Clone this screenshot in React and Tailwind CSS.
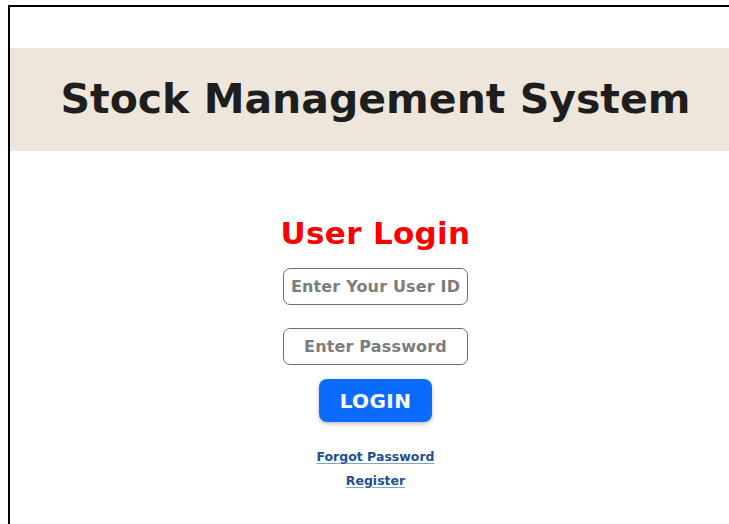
import React, { useState } from "react";

const font = { fontFamily: "'DejaVu Sans', Inter, sans-serif" };

const LoginPage = () => {
  const [userId, setUserId] = useState("");
  const [password, setPassword] = useState("");

  return (
    <div className="w-[729px] h-[524px] overflow-hidden bg-white pt-[5px] pl-[8px]" style={font}>
      <div className="h-full border-t-2 border-l-2 border-black">
        {/* header band */}
        <div className="mt-[41px] h-[103px] bg-[#eee6db] flex items-center">
          <div className="w-[731px] shrink-0 flex justify-center">
            <h1 className="text-[41px] font-bold text-[#1e1e1e] leading-none">
              Stock Management System
            </h1>
          </div>
        </div>

        {/* login form */}
        <div className="w-[731px] flex flex-col items-center">
          <h2 className="mt-[67px] text-[31px] font-bold tracking-[0.01em] text-[#ff0000] leading-none">
            User Login
          </h2>
          <input
            value={userId}
            onChange={(e) => setUserId(e.target.value)}
            placeholder="Enter Your User ID"
            className="mt-[19px] w-[185px] h-[37px] rounded-[7px] border-[1.5px] border-[#6f6f6f] text-center text-[16px] font-bold tracking-[0.01em] placeholder:text-[#7c7c7c] outline-none"
          />
          <input
            type="password"
            value={password}
            onChange={(e) => setPassword(e.target.value)}
            placeholder="Enter Password"
            className="mt-[23px] w-[185px] h-[37px] rounded-[7px] border-[1.5px] border-[#6f6f6f] text-center text-[16px] font-bold tracking-[0.01em] placeholder:text-[#7c7c7c] outline-none"
          />
          <button className="mt-[14px] w-[113px] h-[43px] rounded-[8px] bg-[#0b6bff] text-white text-[20px] font-bold tracking-[0.02em] shadow-[0_2px_4px_rgba(0,0,0,0.25)]">
            LOGIN
          </button>
          <a href="#" className="mt-[29px] text-[12.5px] font-bold text-[#1d4f91] underline decoration-[#7aa7d8] underline-offset-2 leading-none">
            Forgot Password
          </a>
          <a href="#" className="mt-[11px] text-[12.5px] font-bold text-[#1d4f91] underline decoration-[#7aa7d8] underline-offset-2 leading-none">
            Register
          </a>
        </div>
      </div>
    </div>
  );
};

export default function App() {
  return <LoginPage />;
}
